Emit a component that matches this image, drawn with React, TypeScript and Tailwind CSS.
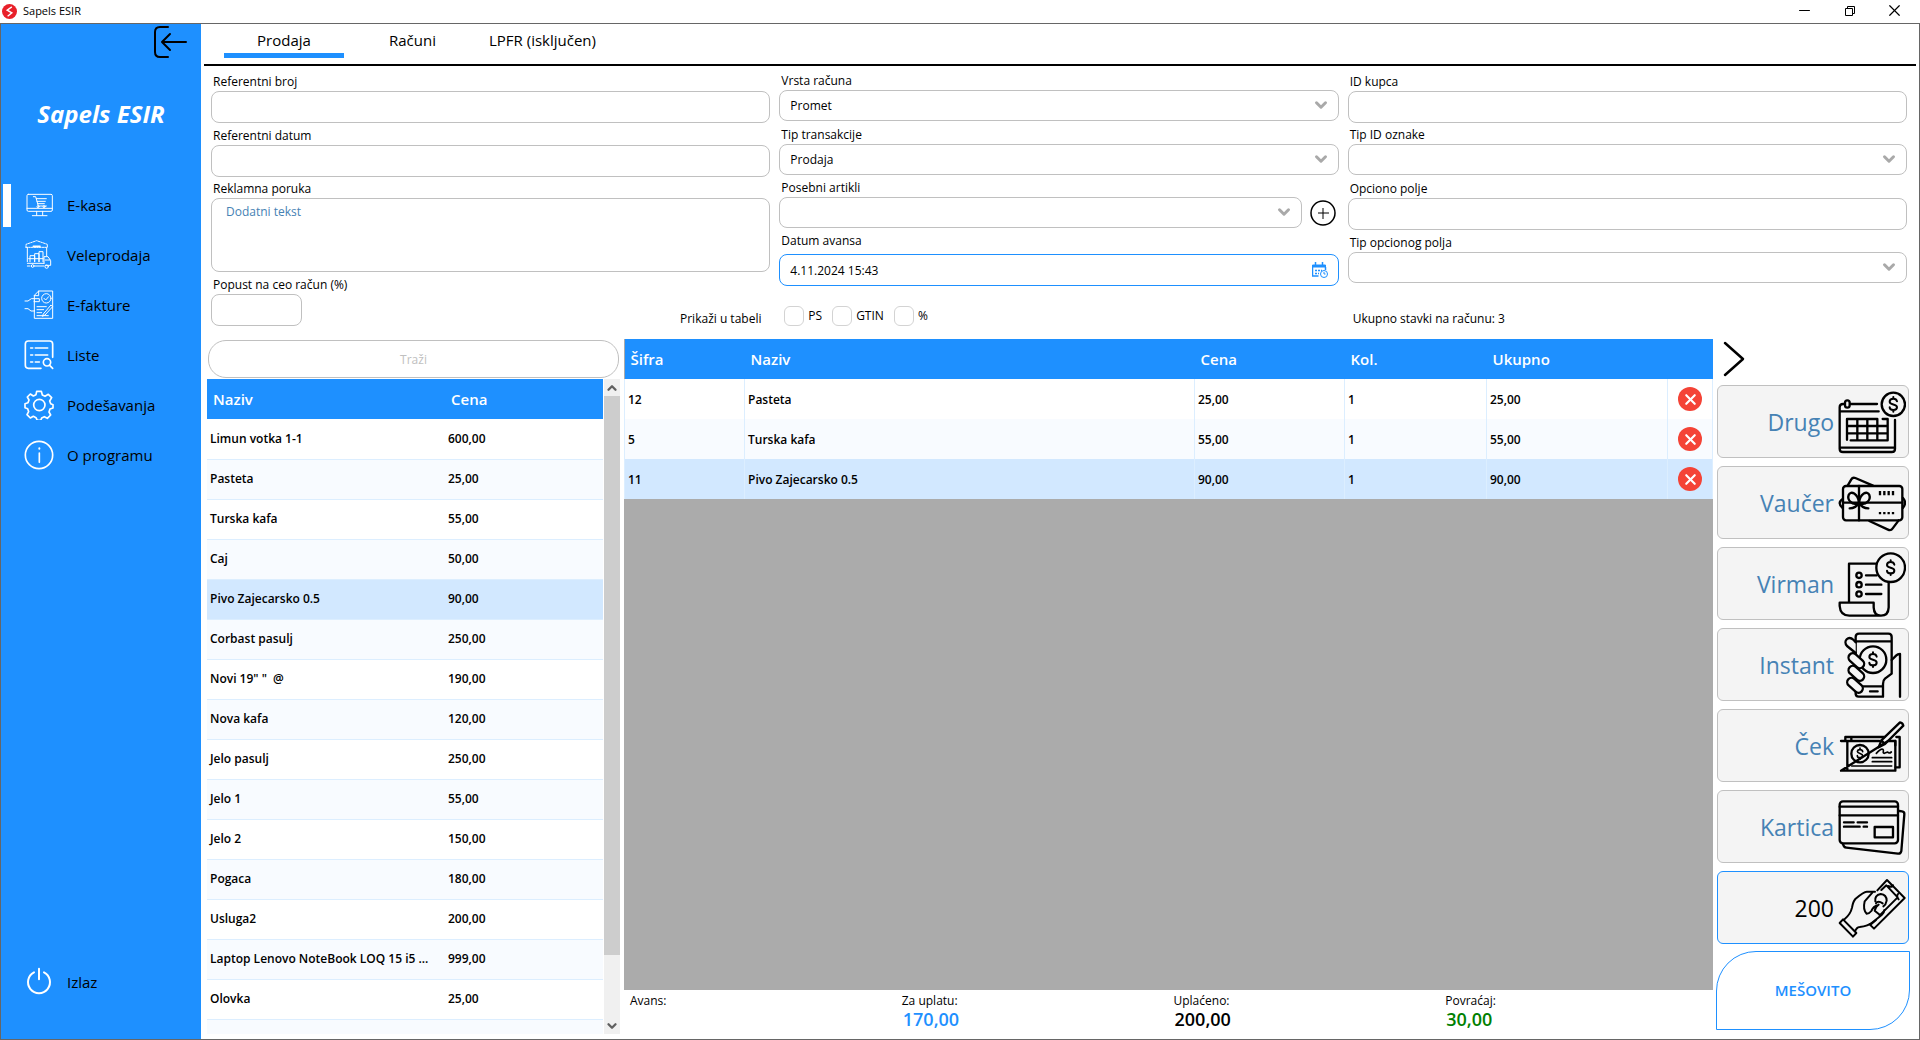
import { useState } from "react";
import type { ReactNode } from "react";
import { ChevronDown, ChevronUp, Minus, X } from "lucide-react";

type Item = { name: string; price: string };
type Line = { code: string; name: string; price: string; qty: string; total: string };

const items: Item[] = [
  { name: "Limun votka 1-1", price: "600,00" },
  { name: "Pasteta", price: "25,00" },
  { name: "Turska kafa", price: "55,00" },
  { name: "Caj", price: "50,00" },
  { name: "Pivo Zajecarsko 0.5", price: "90,00" },
  { name: "Corbast pasulj", price: "250,00" },
  { name: "Novi 19\" \"  @", price: "190,00" },
  { name: "Nova kafa", price: "120,00" },
  { name: "Jelo pasulj", price: "250,00" },
  { name: "Jelo 1", price: "55,00" },
  { name: "Jelo 2", price: "150,00" },
  { name: "Pogaca", price: "180,00" },
  { name: "Usluga2", price: "200,00" },
  { name: "Laptop Lenovo NoteBook LOQ 15 i5 ...", price: "999,00" },
  { name: "Olovka", price: "25,00" },
  { name: "", price: "" },
];

const lines: Line[] = [
  { code: "12", name: "Pasteta", price: "25,00", qty: "1", total: "25,00" },
  { code: "5", name: "Turska kafa", price: "55,00", qty: "1", total: "55,00" },
  { code: "11", name: "Pivo Zajecarsko 0.5", price: "90,00", qty: "1", total: "90,00" },
];

/* ---------- sidebar icons ---------- */

function NavIcon({ children }: { children: ReactNode }) {
  return (
    <svg viewBox="0 0 90 90" className="size-[30px] shrink-0 text-white" fill="none" stroke="currentColor" strokeWidth="3" strokeLinecap="round" strokeLinejoin="round" aria-hidden="true">
      {children}
    </svg>
  );
}

const KasaIcon = () => (
  <NavIcon>
    <rect x="9" y="13" width="76" height="51" rx="4" />
    <path d="M9 55h76M38 64v12M56 64v12M25 77h44" />
    <path d="M28 20h7l8 28h24M37 26h30M39 34h25M41 41h20" />
    <circle cx="42" cy="50" r="3" />
    <circle cx="60" cy="50" r="3" />
  </NavIcon>
);

const VeleprodajaIcon = () => (
  <NavIcon>
    <path d="M6 22V13L38 2l32 11v9M6 22h64" strokeDasharray="5 3" />
    <path d="M28 19h20" strokeWidth="5" />
    <path d="M10 23v42M68 23v24M18 65V47h14v18M32 65V41h13v24M45 65V35h12v30M14 56h43" />
    <path d="M10 70h50M60 70V50h12l8 12v14H64" />
    <circle cx="26" cy="78" r="4" />
    <circle cx="68" cy="80" r="5" />
    <path d="M10 78h8M32 78h28M64 60h14" />
  </NavIcon>
);

const FaktureIcon = () => (
  <NavIcon>
    <path d="M31 32V16L44 3h42v82H31V62" />
    <path d="M44 3v14H31" />
    <circle cx="67" cy="25" r="14" />
    <path d="M60 25l5 5 9-10" />
    <path d="M3 33h9l10-7h24v9H30M3 56h9l9 7h10M31 32v30" />
    <path d="M39 50h28M39 59h20M39 68h14M39 77h34" />
    <path d="M80 46l-22 26-3 7 8-4 22-24z" />
  </NavIcon>
);

const ListeIcon = () => (
  <NavIcon>
    <path d="M86 52V12c0-6-3-9-9-9H13c-6 0-9 3-9 9v64c0 6 3 9 9 9h38" strokeWidth="5" />
    <path d="M20 24h6M34 24h37M20 45h6M34 45h37M20 66h6M34 66h12" strokeWidth="5" />
    <circle cx="69" cy="67" r="11" strokeWidth="5" />
    <path d="M77 76l9 9" strokeWidth="5" />
  </NavIcon>
);

const GearIcon = () => (
  <NavIcon>
    <g strokeWidth="5">
      <path d="M38 4h14l3 11 8 4 10-6 10 10-6 10 3 8 7 3v10l-9 3-3 9 5 9-10 10-9-5-8 4-3 7H40l-4-8-8-4-9 5L9 74l5-9-3-9-8-3V41l9-3 3-8-5-9 9-9 9 6 8-4z" />
      <circle cx="46" cy="45" r="17" />
    </g>
  </NavIcon>
);

const InfoIcon = () => (
  <NavIcon>
    <circle cx="45" cy="45" r="41" strokeWidth="5" />
    <path d="M46 39v28" strokeWidth="5" />
    <path d="M46 25v1" strokeWidth="6" />
  </NavIcon>
);

const PowerIcon = () => (
  <NavIcon>
    <path d="M30 16a33 33 0 1 0 30 0M45 5v32" strokeWidth="6" />
  </NavIcon>
);

/* ---------- payment icons ---------- */

function PayIcon({ children }: { children: ReactNode }) {
  return (
    <svg viewBox="0 0 204 204" className="size-[68px] shrink-0 text-black" fill="none" stroke="currentColor" strokeWidth="7" strokeLinecap="round" strokeLinejoin="round" aria-hidden="true">
      {children}
    </svg>
  );
}

// dollar mark centred on x,y
const Dollar = ({ x, y }: { x: number; y: number }) => (
  <path transform={`translate(${x} ${y})`} strokeWidth="6" d="M11-9c-1-5-5-8-11-8s-11 3-11 9c0 11 22 6 22 17 0 6-5 8-11 8s-11-3-11-8M0-22v5M0 17v5" />
);

const DrugoIcon = () => (
  <PayIcon>
    <path d="M117 48H38M20 48h-5Q5 48 5 58v124q0 10 10 10h146q10 0 10-10V96M5 70h117M5 179h166" />
    <rect x="21" y="37" width="14" height="22" rx="7" />
    <path d="M38 157H149V93H134M118 93H27v62M27 114h122M27 136h122M58 93v64M88 93v64M118 93v64" />
    <circle cx="166" cy="49" r="35" />
    <Dollar x={166} y={49} />
  </PayIcon>
);

const VaucerIcon = () => (
  <PayIcon>
    <path d="M29 50l11-19q4-7 12-4l53 23M94 156l56 26q9 4 14-4l18-24" />
    <path d="M14 90q-18 12 0 27M195 87q12 14 0 29" />
    <rect x="15" y="51" width="178" height="103" rx="9" />
    <path d="M15 101h178M63 51v103" />
    <path d="M63 101C42 112 27 92 32 78c6-15 28-4 31 23zM63 101c21 11 36-9 31-23-6-15-28-4-31 23zM63 101q-9 17-28 17M63 101q9 17 28 17" />
    <path d="M126 66v13M139 66v13M152 66v13M165 66v13M126 129v7M139 129v7M152 129v7M165 129v7" strokeLinecap="butt" />
  </PayIcon>
);

const VirmanIcon = () => (
  <PayIcon>
    <path d="M115 41H33v117M152 98v74q-1 25-23 25-21 0-22-25v-14H5v10q2 29 29 29h95" />
    <circle cx="63" cy="76" r="8" />
    <circle cx="63" cy="104" r="8" />
    <circle cx="63" cy="132" r="8" />
    <path d="M84 76h32M84 104h46M84 132h46" />
    <circle cx="158" cy="53" r="43" />
    <Dollar x={158} y={53} />
  </PayIcon>
);

const InstantIcon = () => (
  <PayIcon>
    <path d="M53 190V18q0-10 10-10h88q10 0 10 10v110l-20 15q-6 5-6 16v38H62q-9 0-9-10M53 31h108M60 166h75M96 181h23" />
    <path d="M161 87l14-14q4-4 11-4v128" />
    <circle cx="105" cy="86" r="40" />
    <Dollar x={105} y={86} />
    <g fill="#f4f4f4">
      <path d="M53 66L27 45C14 30 31 12 47 27l6 7" />
      <rect x="-27" y="-13" width="54" height="26" rx="13" transform="translate(55 89) rotate(42)" />
      <rect x="-27" y="-13" width="54" height="26" rx="13" transform="translate(55 127) rotate(42)" />
      <rect x="-27" y="-13" width="54" height="26" rx="13" transform="translate(51 163) rotate(42)" />
    </g>
  </PayIcon>
);

const CekIcon = () => (
  <PayIcon>
    <path d="M22 86V75h117M40 86V76M175 75h10v91h-12M172 100v-13" />
    <path d="M9 87h115M150 87h22v89H9zM28 87v89" />
    <circle cx="66" cy="125" r="26" />
    <path d="M74 119q-1-6-8-6t-8 5c0 8 16 5 16 13q0 6-8 6t-8-6M66 108v5M66 137v5" strokeWidth="5" />
    <path d="M103 137h58M103 149h58M41 162h120" strokeWidth="5" />
    <path d="M115 124q14-16 20-12c4 4-3 12 4 12l10-4q4 6 11 0" strokeWidth="5" />
    <path d="M122 106l8-21 56-54q8 1 10 10l-55 55zM130 85l11 11" />
  </PayIcon>
);

const KarticaIcon = () => (
  <PayIcon>
    <path d="M184 54l8 1q8 1 7 9l-9 110q-2 9-10 8L25 164q-8-1-10-11" />
    <rect x="5" y="25" width="175" height="126" rx="10" />
    <path d="M5 41h175M5 67h175M18 88h29M59 88h28M18 101h47M77 101h10" />
    <rect x="110" y="102" width="55" height="31" />
  </PayIcon>
);

const GotovinaIcon = () => (
  <PayIcon>
    <g strokeWidth="6">
      <path d="M5 147l10-11 40 41-10 11zM18 137q20-16 24-36 3-18 10-26 26-23 35-22h24M51 173q4-13 14-14 26-4 37-13l29-23q8-7 8-15" />
      <path d="M118 49l29-31 53 54-92 92-13-13M130 48l15-14 34 36-54 54M150 36q14 6 15-2M180 60q-6 8 2 16" />
      <path d="M103 56L80 82q-6 26 6 37 8 0 14-8 6-14 20-17M122 92q-8 4-12 18l15 12M112 82q-3-18 16-22 18 2 18 20-2 12-10 17M114 88q6-10 20 0M100 150l14-12" />
    </g>
  </PayIcon>
);

/* ---------- form pieces ---------- */

const box = "block w-full rounded-lg border border-[#c0c0c0] bg-white px-[10px] text-[12px] text-black outline-none";

function Label({ id, children, className = "h-[22px]" }: { id: string; children: string; className?: string }) {
  return (
    <label htmlFor={id} className={`flex items-end pb-px pl-[2px] text-[12px] leading-[16px] ${className}`}>
      {children}
    </label>
  );
}

function Select({ id, options }: { id: string; options: string[] }) {
  return (
    <div className="relative w-full">
      <select id={id} className={`${box} h-[31px] appearance-none`}>
        {options.map((o) => (
          <option key={o}>{o}</option>
        ))}
      </select>
      <ChevronDown className="pointer-events-none absolute top-[6px] right-[9px] size-[18px] text-[#a9a9a9]" strokeWidth={4} />
    </div>
  );
}

function Check({ id, label }: { id: string; label: string }) {
  return (
    <div className="flex items-center gap-[4px]">
      <input id={id} type="checkbox" className="size-[20px] appearance-none rounded-md border border-[#d3d3d3] bg-white checked:bg-[#1e90ff]" />
      <label htmlFor={id}>{label}</label>
    </div>
  );
}

/* ---------- page parts ---------- */

const nav = [
  { label: "E-kasa", Icon: KasaIcon },
  { label: "Veleprodaja", Icon: VeleprodajaIcon },
  { label: "E-fakture", Icon: FaktureIcon },
  { label: "Liste", Icon: ListeIcon },
  { label: "Podešavanja", Icon: GearIcon },
  { label: "O programu", Icon: InfoIcon },
];

const payments = [
  { label: "Drugo", Icon: DrugoIcon },
  { label: "Vaučer", Icon: VaucerIcon },
  { label: "Virman", Icon: VirmanIcon },
  { label: "Instant", Icon: InstantIcon },
  { label: "Ček", Icon: CekIcon },
  { label: "Kartica", Icon: KarticaIcon },
];

function TitleBar() {
  return (
    <header className="flex h-[23px] shrink-0 items-center bg-white pl-[2px]">
      <svg viewBox="0 0 16 16" className="size-[15px]" aria-hidden="true">
        <circle cx="8" cy="8" r="8" fill="#e8202a" />
        <path d="M10.500 3L5.500 6.500l5 3L6 13" fill="none" stroke="#fff" strokeWidth="1.500" />
      </svg>
      <h1 className="flex-1 pl-[6px] text-[11px]">Sapels ESIR</h1>
      <div className="flex h-full items-center pr-[3px] pb-[2px]">
        <button type="button" aria-label="Minimize" className="flex w-[45px] justify-center">
          <Minus className="size-[17px]" strokeWidth={1.5} />
        </button>
        <button type="button" aria-label="Restore" className="flex w-[45px] justify-center">
          <svg viewBox="0 0 10 10" className="size-[10px]" fill="none" stroke="#000" aria-hidden="true">
            <path d="M.5 2.500h7v7h-7zM2.500 2.500v-2h7v7h-2" />
          </svg>
        </button>
        <button type="button" aria-label="Close" className="flex w-[45px] justify-center">
          <X className="size-[19px]" strokeWidth={1.5} />
        </button>
      </div>
    </header>
  );
}

function Sidebar() {
  return (
    <aside className="flex w-[200px] shrink-0 flex-col bg-[#1e90ff]">
      <button type="button" aria-label="Sakrij meni" className="mt-[2px] mr-[14px] self-end">
        <svg viewBox="0 0 33 32" className="h-[32px] w-[33px]" fill="none" stroke="#000" strokeWidth="2" strokeLinecap="round" strokeLinejoin="round" aria-hidden="true">
          <path d="M14 1H6Q1 1 1 6v20q0 5 5 5h8M32 16H8M16 8l-8 8 8 8" />
        </svg>
      </button>
      <p className="mt-[40px] text-center text-2xl font-bold text-white italic">Sapels ESIR</p>
      <nav className="mt-[50px] flex flex-col">
        {nav.map(({ label, Icon }, i) => (
          <a key={label} href="#" className="flex h-[50px] items-center pl-[2px] text-[15px]">
            <span className={`mr-[13px] h-[43px] w-[8px] ${i === 0 ? "bg-white" : ""}`} />
            <Icon />
            <span className="pl-[13px]">{label}</span>
          </a>
        ))}
      </nav>
      <a href="#" className="mt-auto mb-[32px] flex h-[50px] items-center pl-[23px] text-[15px]">
        <PowerIcon />
        <span className="pl-[13px]">Izlaz</span>
      </a>
    </aside>
  );
}

function Tabs() {
  return (
    <div className="mr-[3px] ml-[3px] flex h-[42px] shrink-0 border-b-2 border-black pl-[20px] text-[15px]">
      <button type="button" className="flex h-[34px] w-[120px] items-center justify-center border-b-[5px] border-[#1e90ff] pt-[3px]">Prodaja</button>
      <button type="button" className="flex h-[34px] w-[137px] items-center justify-center border-b-[5px] border-transparent pt-[3px]">Računi</button>
      <button type="button" className="flex h-[34px] w-[123px] items-center justify-center border-b-[5px] border-transparent pt-[3px]">LPFR (isključen)</button>
    </div>
  );
}

function InvoiceForm() {
  return (
    <form className="grid shrink-0 grid-cols-3 gap-[9px] pr-[12px] pl-[10px]">
      <div>
        <Label id="ref" className="h-[25px]">Referentni broj</Label>
        <input id="ref" className={`${box} h-[32px]`} />
        <Label id="refDatum">Referentni datum</Label>
        <input id="refDatum" className={`${box} h-[32px]`} />
        <Label id="poruka" className="h-[21px]">Reklamna poruka</Label>
        <textarea id="poruka" placeholder="Dodatni tekst" className={`${box} h-[74px] resize-none px-[14px] py-[5px] leading-[16px] placeholder:text-[#4682b4]`} />
        <Label id="popust">Popust na ceo račun (%)</Label>
        <div className="w-[91px]">
          <input id="popust" className={`${box} h-[32px]`} />
        </div>
      </div>

      <div>
        <Label id="vrsta" className="h-[24px]">Vrsta računa</Label>
        <Select id="vrsta" options={["Promet"]} />
        <Label id="tip" className="h-[23px]">Tip transakcije</Label>
        <Select id="tip" options={["Prodaja"]} />
        <Label id="artikli">Posebni artikli</Label>
        <div className="flex items-center gap-[8px]">
          <Select id="artikli" options={[""]} />
          <button type="button" aria-label="Dodaj artikal" className="mr-[3px] shrink-0">
            <svg viewBox="0 0 26 26" className="size-[26px]" fill="none" stroke="#000" aria-hidden="true">
              <circle cx="13" cy="13" r="12" strokeWidth="1.500" />
              <path d="M13 8v11M8 13h11" />
            </svg>
          </button>
        </div>
        <Label id="avans" className="mb-[4px] h-[22px]">Datum avansa</Label>
        <div className="relative">
          <input id="avans" defaultValue="4.11.2024 15:43" className="block h-[32px] w-full rounded-lg border border-[#1e90ff] bg-white px-[10px] text-[12px] outline-none" />
          <svg viewBox="0 0 16 16" className="absolute top-[8px] right-[11px] size-[16px]" fill="none" stroke="#1e90ff" aria-hidden="true">
            <path d="M.5 3h13v2H.5z" fill="#1e90ff" />
            <path d="M3.500 0v3M10.500 0v3M.5 5v9h6M13.500 5v3M3 8.500h2M6 8.500h2M9 8.500h1M3 11.500h2M6 11.500h1" strokeWidth="1.500" />
            <circle cx="12" cy="12" r="3.500" fill="#fff" />
            <path d="M12 10v2h1.500" />
          </svg>
        </div>
        <div className="mt-[20px] flex h-[20px] items-center gap-[10px] pl-[5px] text-[12px]">
          <Check id="ps" label="PS" />
          <Check id="gtin" label="GTIN" />
          <Check id="proc" label="%" />
        </div>
      </div>

      <div>
        <Label id="kupac" className="h-[25px]">ID kupca</Label>
        <input id="kupac" className={`${box} h-[32px]`} />
        <Label id="tipId" className="h-[21px]">Tip ID oznake</Label>
        <Select id="tipId" options={[""]} />
        <Label id="opciono" className="h-[23px]">Opciono polje</Label>
        <input id="opciono" className={`${box} h-[32px]`} />
        <Label id="tipPolja">Tip opcionog polja</Label>
        <Select id="tipPolja" options={[""]} />
        <p className="mt-[28px] pl-[5px] text-[12px] leading-[16px]">Ukupno stavki na računu: 3</p>
      </div>
    </form>
  );
}

function ItemList() {
  const [selected, setSelected] = useState(4);

  return (
    <section className="flex min-h-0 w-[413px] shrink-0 flex-col pb-[5px]">
      <input aria-label="Traži" placeholder="Traži" className="mx-px mt-px mb-px h-[38px] shrink-0 rounded-[18px] border border-[#c0c0c0] text-center text-[12px] outline-none placeholder:text-[#c0c0c0]" />
      <div className="flex min-h-0 flex-1 gap-px">
        <div className="min-h-0 flex-1 overflow-hidden">
          <table className="w-full table-fixed border-collapse text-left">
            <thead>
              <tr className="h-[40px] bg-[#1e90ff] text-[15px] text-white">
                <th className="w-[238px] pl-[6px] font-semibold">Naziv</th>
                <th className="pl-[6px] font-semibold">Cena</th>
              </tr>
            </thead>
            <tbody>
              {items.map((item, i) => (
                <tr
                  key={i}
                  onClick={() => setSelected(i)}
                  className={`h-[40px] border-b border-[#dceeff] text-[12px] font-semibold ${i === selected ? "bg-[#d2e8ff]" : i % 2 ? "bg-[#f8fbff]" : "bg-white"}`}
                >
                  <td className="pl-[3px] whitespace-pre">{item.name}</td>
                  <td className="pl-[3px]">{item.price}</td>
                </tr>
              ))}
            </tbody>
          </table>
        </div>
        <div className="flex w-[16px] shrink-0 flex-col bg-[#f0f0f0]">
          <button type="button" aria-label="Gore" className="flex h-[17px] items-center justify-center">
            <ChevronUp className="size-[14px] text-[#606060]" strokeWidth={4} />
          </button>
          <div className="h-[559px] w-full bg-[#cdcdcd]" />
          <button type="button" aria-label="Dole" className="mt-auto flex h-[17px] items-center justify-center">
            <ChevronDown className="size-[14px] text-[#606060]" strokeWidth={4} />
          </button>
        </div>
      </div>
    </section>
  );
}

function Invoice() {
  const td = "border-l border-[#dceeff] pt-[2px] pl-[3px]";

  return (
    <section className="flex min-w-0 flex-1 flex-col">
      <div className="min-h-0 flex-1 bg-[#ababab]">
        <table className="w-full table-fixed border-collapse text-left">
          <thead>
            <tr className="h-[40px] bg-[#1e90ff] text-[15px] text-white">
              <th className="w-[120px] pl-[6px] font-semibold">Šifra</th>
              <th className="pl-[6px] font-semibold">Naziv</th>
              <th className="w-[150px] pl-[6px] font-semibold">Cena</th>
              <th className="w-[142px] pl-[6px] font-semibold">Kol.</th>
              <th className="w-[181px] pl-[6px] font-semibold">Ukupno</th>
              <th className="w-[45px]" />
            </tr>
          </thead>
          <tbody>
            {lines.map((line, i) => (
              <tr key={line.code} className={`h-[40px] text-[12px] font-semibold ${i === 2 ? "bg-[#d2e8ff]" : i === 1 ? "bg-[#f8fbff]" : "bg-white"}`}>
                <td className={td}>{line.code}</td>
                <td className={td}>{line.name}</td>
                <td className={td}>{line.price}</td>
                <td className={td}>{line.qty}</td>
                <td className={td}>{line.total}</td>
                <td className="border-x border-[#dceeff]">
                  <button type="button" aria-label="Obriši stavku" className="mx-auto flex size-[24px] items-center justify-center rounded-full bg-[#f44336]">
                    <X className="size-[17px] text-white" strokeWidth={3} />
                  </button>
                </td>
              </tr>
            ))}
          </tbody>
        </table>
      </div>
      <dl className="grid h-[49px] shrink-0 grid-cols-4 pt-[3px] pl-[6px] text-[12px] leading-[16px]">
        <div>
          <dt>Avans:</dt>
        </div>
        <div className="pl-px">
          <dt>Za uplatu:</dt>
          <dd className="pl-px text-[18px] leading-[20px] font-semibold text-[#1e90ff]">170,00</dd>
        </div>
        <div className="pl-[2px]">
          <dt>Uplaćeno:</dt>
          <dd className="pl-px text-[18px] leading-[20px] font-semibold">200,00</dd>
        </div>
        <div className="pl-[3px]">
          <dt>Povraćaj:</dt>
          <dd className="pl-px text-[18px] leading-[20px] font-semibold text-[#008000]">30,00</dd>
        </div>
      </dl>
    </section>
  );
}

function Payments() {
  const btn = "flex h-[73px] shrink-0 items-center justify-end gap-[4px] rounded-md border bg-[#f4f4f4] pr-[2px] text-[23px]";

  return (
    <section className="flex w-[194px] shrink-0 flex-col">
      <button type="button" aria-label="Sledeće" className="mt-[2px] ml-[7px] self-start">
        <svg viewBox="0 0 22 36" className="h-[36px] w-[22px]" fill="none" stroke="#000" strokeWidth="2.500" strokeLinecap="round" strokeLinejoin="round" aria-hidden="true">
          <path d="M2 2l18 16L2 34" />
        </svg>
      </button>
      <div className="mt-[8px] flex flex-col gap-[8px] px-px">
        {payments.map(({ label, Icon }) => (
          <button key={label} type="button" className={`${btn} border-[#c0c0c0] text-[#4682b4]`}>
            <span className="pt-[2px]">{label}</span>
            <Icon />
          </button>
        ))}
        <button type="button" className={`${btn} border-[#1e90ff] text-black`}>
          <span className="pt-[2px]">200</span>
          <GotovinaIcon />
        </button>
      </div>
      <button type="button" className="mt-[7px] h-[79px] shrink-0 rounded-tl-[40px] rounded-br-[40px] border border-[#1e90ff] text-[15px] font-semibold text-[#1e90ff]">
        MEŠOVITO
      </button>
    </section>
  );
}

export default function App() {
  return (
    <div className="flex h-screen flex-col overflow-hidden bg-white font-['Open_Sans','Noto_Sans',sans-serif] text-black">
      <TitleBar />
      <div className="flex min-h-0 flex-1 border border-[#666666]">
        <Sidebar />
        <main className="flex min-w-0 flex-1 flex-col">
          <Tabs />
          <div className="relative shrink-0">
            <InvoiceForm />
            <p className="absolute bottom-0 left-[479px] text-[12px] leading-[16px]">Prikaži u tabeli</p>
          </div>
          <div className="mt-[12px] flex min-h-0 flex-1 gap-[3px] pr-[9px] pl-[6px]">
            <ItemList />
            <div className="flex min-w-0 flex-1 gap-[3px] pl-px">
              <Invoice />
              <Payments />
            </div>
          </div>
        </main>
      </div>
    </div>
  );
}
